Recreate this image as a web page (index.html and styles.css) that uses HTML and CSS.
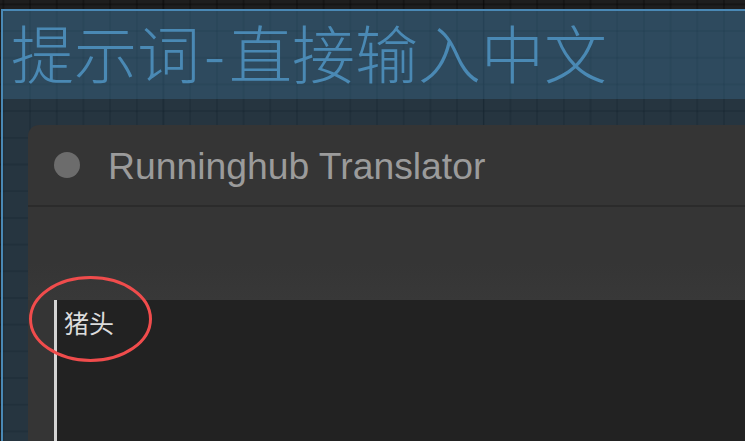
FILE: index.html
```html
<!DOCTYPE html>
<html lang="zh">
<head>
<meta charset="utf-8">
<title>Runninghub Translator</title>
<link rel="stylesheet" href="styles.css">
</head>
<body>
<div class="canvas">
  <section class="group">
    <header class="group-header">
      <h1 class="group-title">提示词<span class="dash">-</span>直接输入中文</h1>
    </header>
    <div class="group-body">
      <div class="node">
        <div class="node-title">
          <span class="node-dot"></span>
          <span class="node-name">Runninghub Translator</span>
        </div>
        <div class="node-widgets"></div>
        <div class="node-input">
          <div class="textarea">猪头</div>
        </div>
      </div>
    </div>
  </section>
  <svg class="annotation" width="126" height="89" viewBox="0 0 126 89" aria-hidden="true">
    <ellipse cx="62.5" cy="44" rx="60" ry="41.5" fill="none" stroke="#f04c4c" stroke-width="3"/>
  </svg>
</div>
</body>
</html>
```
FILE: styles.css
```css
html, body {
  margin: 0;
  padding: 0;
}
body {
  width: 745px;
  height: 441px;
  overflow: hidden;
  background-color: #1e1e1e;
  font-family: "Liberation Sans", Arial, "Noto Sans CJK SC", sans-serif;
}
.canvas {
  position: relative;
  width: 745px;
  height: 441px;
  overflow: hidden;
  padding-top: 9px;
  box-sizing: border-box;
  background-color: #1e1e1e;
  background-image:
    linear-gradient(to right, rgba(0,0,0,0.3) 1px, transparent 1px),
    linear-gradient(to right, rgba(0,0,0,0.26) 1.5px, transparent 1.5px),
    linear-gradient(to bottom, rgba(0,0,0,0.26) 1.5px, transparent 1.5px);
  background-size: 320.4px 100%, 26.7px 26.7px, 26.7px 26.7px;
  background-position: 162.6px 0, 2.4px 0, 0 3.4px;
}
.group {
  margin-left: 1px;
  border-top: 2px solid #4a89b6;
  border-left: 2px solid #4a89b6;
  background: rgba(63, 120, 158, 0.27);
  height: 460px;
}
.group-header {
  height: 88px;
  background: rgba(63, 120, 158, 0.315);
  display: flex;
  align-items: center;
}
.group-title {
  margin: 0;
  padding-left: 8px;
  font-family: "Noto Sans CJK SC", "Noto Sans", sans-serif;
  font-weight: 300;
  font-size: 63px;
  line-height: 1;
  color: #4a89b4;
  white-space: nowrap;
  position: relative;
  top: -5px;
}
.dash {
  padding: 0 4px;
}
.group-body {
  padding-top: 26px;
  padding-left: 25px;
}
.node {
  background: #353535;
  border-top-left-radius: 11px;
  height: 340px;
  display: flex;
  flex-direction: column;
}
.node-title {
  height: 80px;
  border-bottom: 2px solid #2b2b2b;
  display: flex;
  align-items: center;
  padding-left: 26px;
  gap: 28px;
}
.node-dot {
  width: 26px;
  height: 26px;
  border-radius: 50%;
  background: #6c6c6c;
  flex: none;
}
.node-name {
  font-family: "Liberation Sans", Arial, sans-serif;
  font-size: 37.3px;
  color: #9b9b9b;
  white-space: nowrap;
  position: relative;
  top: 1px;
}
.node-widgets {
  height: 93px;
  background: linear-gradient(to bottom, #353535 60%, #383838);
}
.node-input {
  flex: 1;
  padding-left: 26px;
  display: flex;
}
.textarea {
  flex: 1;
  background: #222222;
  border-left: 3px solid #d4d4d4;
  padding: 7px 7px;
  font-family: "Noto Sans CJK SC", sans-serif;
  font-size: 25px;
  line-height: 30px;
  color: #dcdcdc;
}
.annotation {
  position: absolute;
  left: 28px;
  top: 275px;
}
```
